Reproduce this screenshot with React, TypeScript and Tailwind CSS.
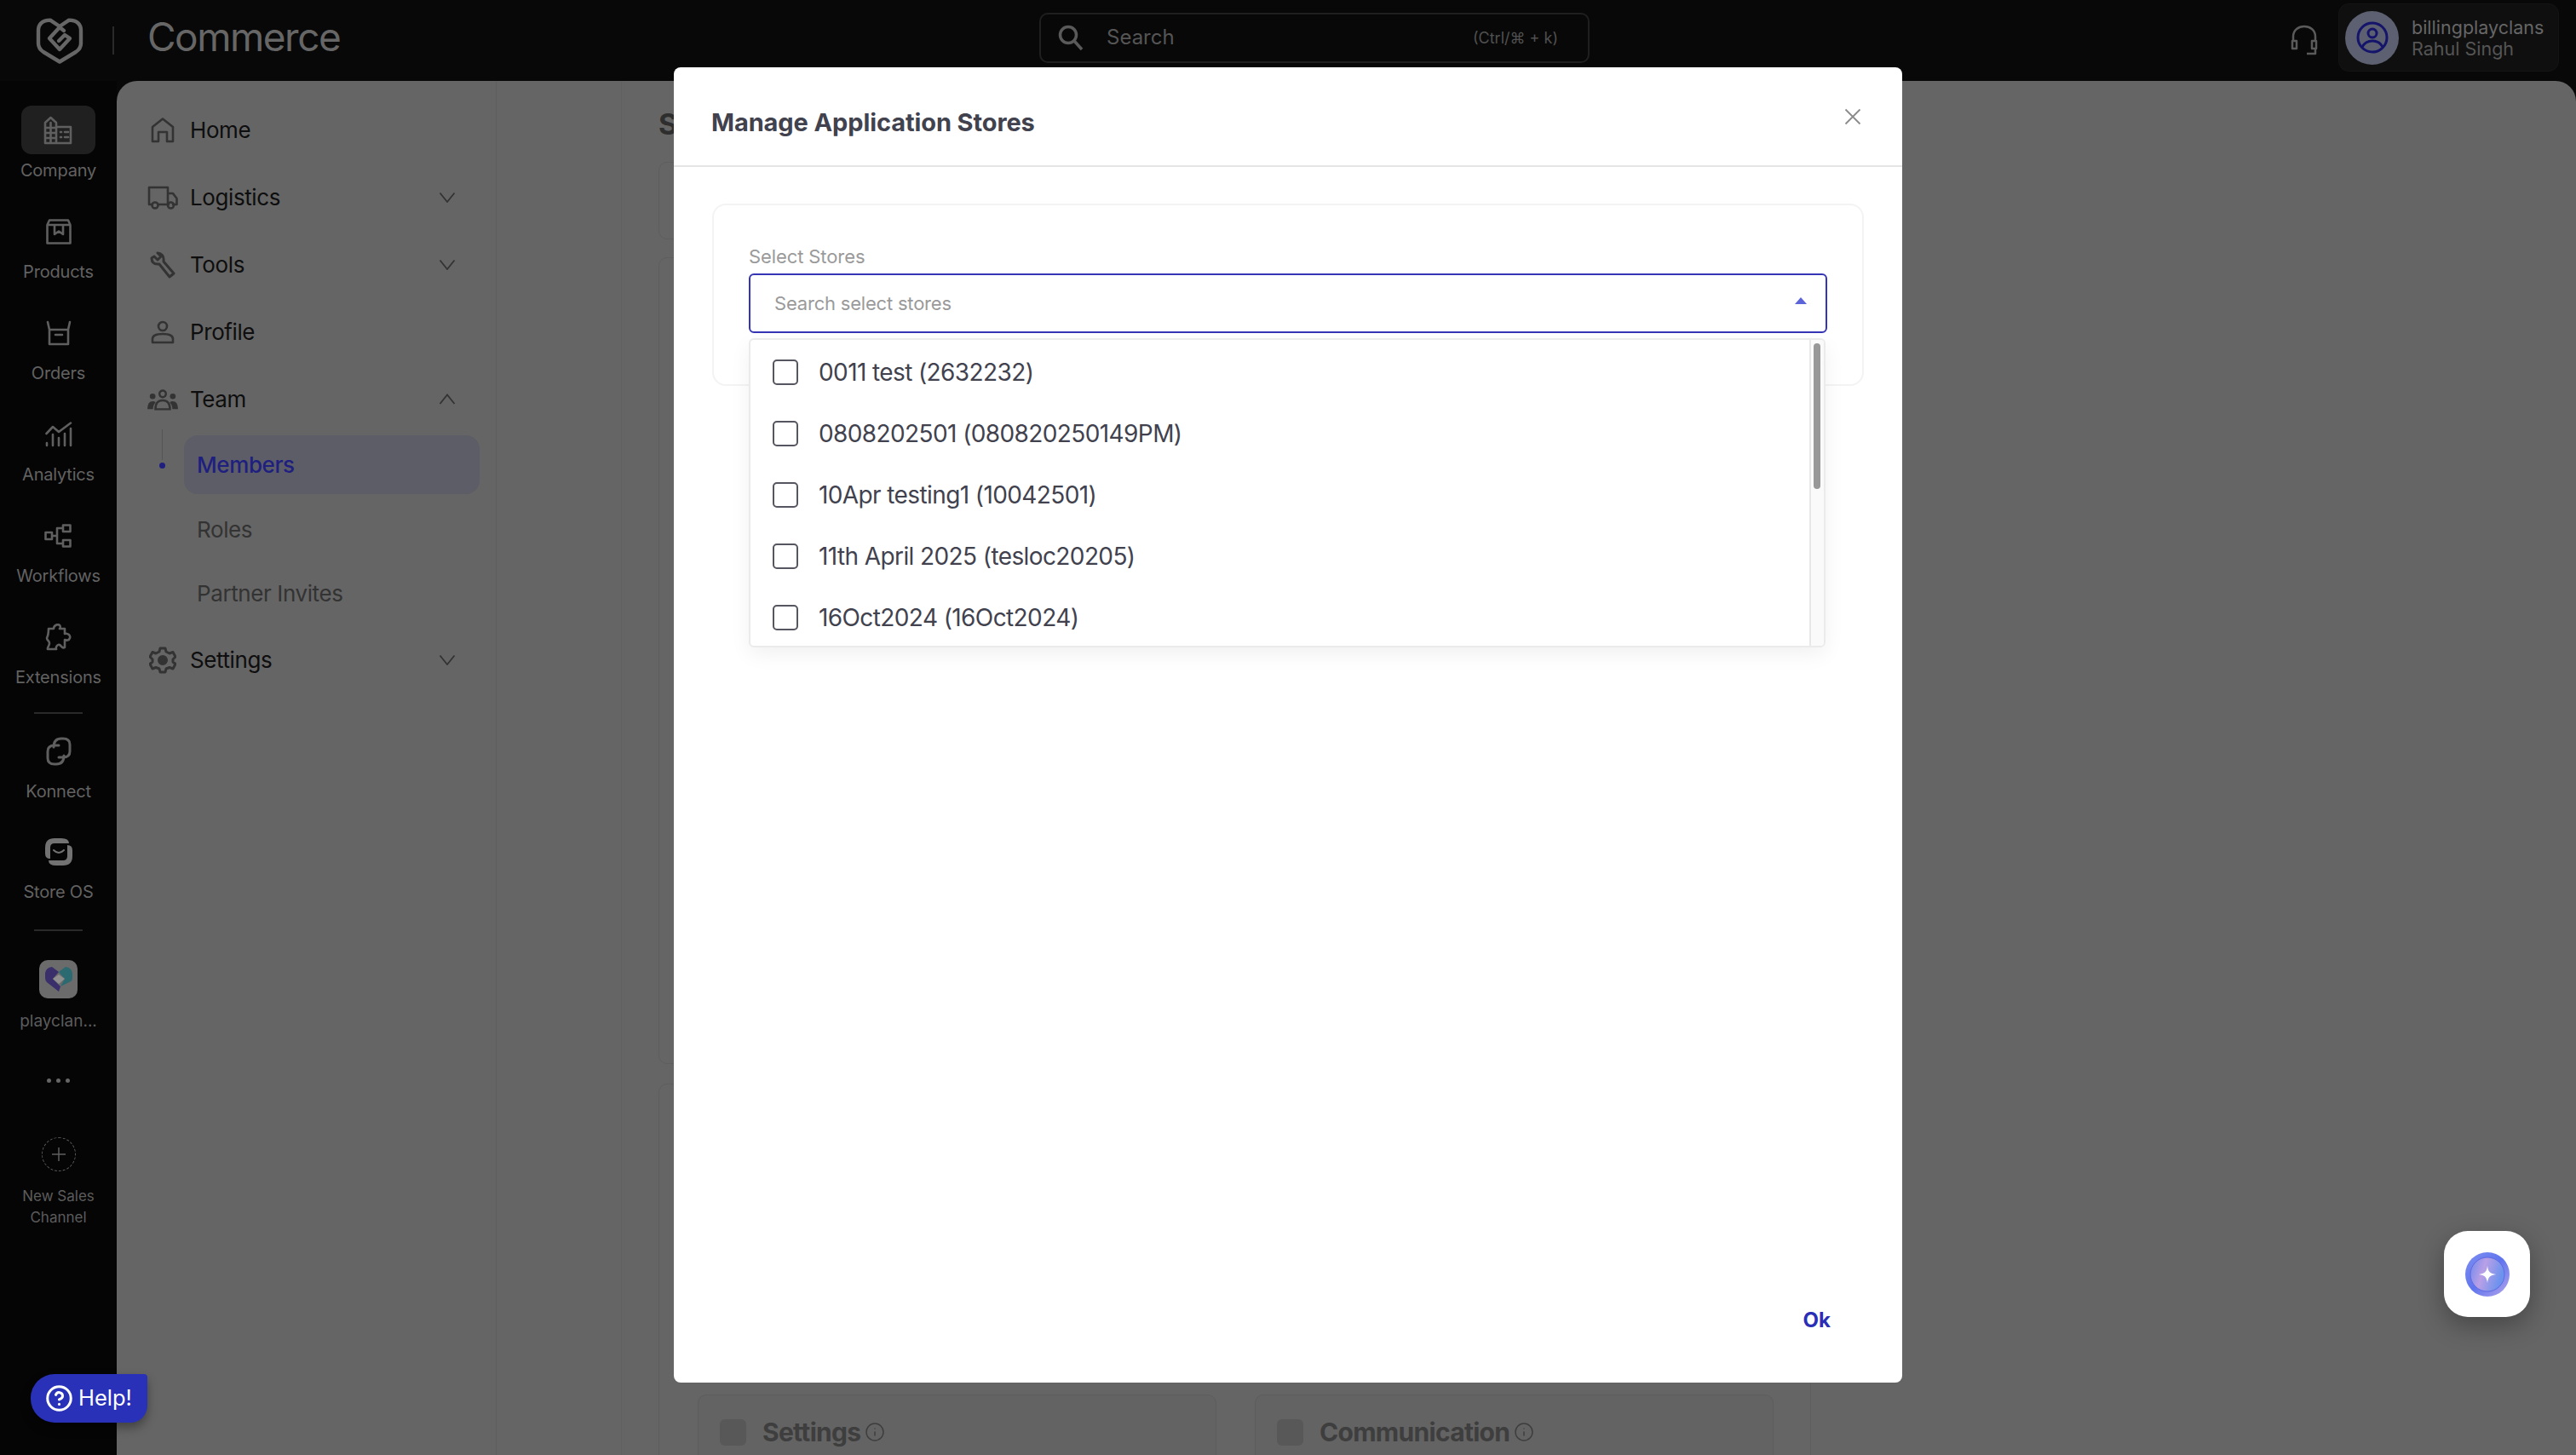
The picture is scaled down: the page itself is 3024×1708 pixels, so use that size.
import React from "react";
import { CircleHelp, Info } from "lucide-react";

const side = { fill: "none", stroke: "#5f5f5f", strokeWidth: 2.6, strokeLinejoin: "round" as const, strokeLinecap: "round" as const };
const nav = { fill: "none", stroke: "#333333", strokeWidth: 2.6, strokeLinejoin: "round" as const, strokeLinecap: "round" as const };

function Logo() {
  return (
    <svg width="56" height="54" viewBox="0 0 56 54" fill="none" stroke="#666666" strokeWidth="4.4" strokeLinejoin="round" strokeLinecap="round">
      <path d="M28 10 L17 2.6 Q3 3 3 15 V30 Q3 36 9 40 L28 51.5 L47 40 Q53 36 53 30 V15 Q53 3 39 2.6 Z" />
      <path d="M33 15 L28 11 L16 24 L28 37 L40 24 L34 20 L27 27" />
    </svg>
  );
}

function SideIcons({ name }: { name: string }) {
  if (name === "Company")
    return (
      <svg width="34" height="34" viewBox="0 0 34 34" {...side}>
        <path d="M2 32 V8 L8.5 2 L15 8 V32 M2 32 H32 V13 H15 M2 14 H15 M2 20 H15 M2 26 H15 M8.500 8 V32" />
        <path d="M20 19 H21 M25 19 H29 M20 25 H21 M25 25 H29" />
      </svg>
    );
  if (name === "Products")
    return (
      <svg width="30" height="30" viewBox="0 0 30 30" {...side}>
        <path d="M4 1.500 H26 L28.500 7 V28.500 H1.500 V7 Z M1.500 7 H28.500 M10 7 V18 L15 14.500 L20 18 V7" />
      </svg>
    );
  if (name === "Orders")
    return (
      <svg width="32" height="30" viewBox="0 0 32 30" {...side}>
        <path d="M3 2 L5 11 V28 H27 V11 L29 2 M5 11 H27 M12 17 H20" />
      </svg>
    );
  if (name === "Analytics")
    return (
      <svg width="32" height="30" viewBox="0 0 32 30" {...side}>
        <path d="M1.500 14 L9 6 L16 12 L30 1.500 M2 28 V25 M9 28 V15 M16 28 V19 M23 28 V14 M30 28 V8" />
      </svg>
    );
  if (name === "Workflows")
    return (
      <svg width="32" height="28" viewBox="0 0 32 28" {...side}>
        <path d="M1.500 10 H9 V18 H1.500 Z M22 1.500 H30.500 V9 H22 Z M22 19 H30.500 V26.500 H22 Z M9 14 H15 M15 5 V23 M15 5 H22 M15 23 H22" />
      </svg>
    );
  if (name === "Extensions")
    return (
      <svg width="32" height="32" viewBox="0 0 32 32" {...side}>
        <path d="M5 6 H11 C11 2 16 0 18 2 C19 3 19 5 18 6 H24 V12 C28 11 31 14 30 17 C29 20 26 20 24 19 V28 C21 30 20 26 18 25 C16 24 13 27 14 30 L4 30 C3 29 6 26 6 23 C6 20 3 20 3 17 C5 13 5 10 5 6 Z" />
      </svg>
    );
  if (name === "Konnect")
    return (
      <svg width="30" height="34" viewBox="0 0 30 34" {...side}>
        <path d="M9 12 Q9 2 18 2 H20 Q28 2 28 9 V17 Q28 24 20 24 H15" strokeWidth="3" />
        <path d="M21 22 Q21 32 12 32 H10 Q2 32 2 25 V17 Q2 10 10 10 H15" strokeWidth="3" />
      </svg>
    );
  if (name === "Store OS")
    return (
      <svg width="34" height="34" viewBox="0 0 34 34">
        <path d="M1 12 Q1 1 12 1 H20 Q29 1 29 7 H12 Q7 7 7 12 V25 Q1 25 1 19 Z" fill="#727272" />
        <path d="M33 22 Q33 33 22 33 H14 Q5 33 5 27 H22 Q27 27 27 22 V9 Q33 9 33 15 Z" fill="#727272" />
        <path d="M11 15 Q17 21 23 15" fill="none" stroke="#727272" strokeWidth="2" strokeLinecap="round" />
      </svg>
    );
  return null;
}

function Rail({ name, active, h }: { name: string; active?: boolean; h: string }) {
  return (
    <div className={`flex flex-col items-center ${h}`}>
      <div className={`flex h-[57px] w-[87px] items-center justify-center rounded-[12px] ${active ? "bg-[#202020]" : ""}`}>
        <SideIcons name={name} />
      </div>
      <span className="mt-[7px] text-[20px] leading-[24px] tracking-[-0.2px] text-[#626262]">{name}</span>
    </div>
  );
}

function Chevron({ up }: { up?: boolean }) {
  return (
    <svg width="20" height="13" viewBox="0 0 20 13" fill="none" stroke="#333333" strokeWidth="1.800">
      <path d={up ? "M1.500 12 L10 1.500 L18.500 12" : "M1.500 1.500 L10 12 L18.500 1.500"} />
    </svg>
  );
}

function NavIcon({ name }: { name: string }) {
  if (name === "Home")
    return (
      <svg width="28" height="30" viewBox="0 0 28 30" {...nav}>
        <path d="M2 28 V11 L14 1.500 L26 11 V28 H19 V17 H9 V28 Z" />
      </svg>
    );
  if (name === "Logistics")
    return (
      <svg width="36" height="28" viewBox="0 0 36 28" {...nav}>
        <path d="M6 22 H2 V2 H24 V22 H13 M24 9 H30 L34.500 15 V22 H30 M24 22 H25" />
        <circle cx="9" cy="23" r="3.500" />
        <circle cx="27.500" cy="23" r="3.500" />
      </svg>
    );
  if (name === "Tools")
    return (
      <svg width="30" height="32" viewBox="0 0 30 32" {...nav}>
        <path d="M9 2 L13 6 L9 10 L5 6 L2 8 Q2 15 9 15 L11 15 L23 30 L28 26 L16 12 Q17 3 9 2 Z" strokeWidth="3" />
      </svg>
    );
  if (name === "Profile")
    return (
      <svg width="28" height="28" viewBox="0 0 28 28" {...nav}>
        <circle cx="14" cy="7" r="5" />
        <path d="M2 26 V22 Q2 16 14 16 Q26 16 26 22 V26 Z" />
      </svg>
    );
  if (name === "Team")
    return (
      <svg width="38" height="26" viewBox="0 0 38 26">
        <circle cx="19" cy="6" r="4" fill="none" stroke="#333333" strokeWidth="2.600" />
        <circle cx="6.500" cy="9" r="3.500" fill="#333333" />
        <circle cx="31.500" cy="9" r="3.500" fill="#333333" />
        <path d="M10 25 Q10 14 19 14 Q28 14 28 25 Z" fill="none" stroke="#333333" strokeWidth="2.600" />
        <path d="M0 25 Q0 15 7 15 Q10 15 10 17 Q7 20 7 25 Z M38 25 Q38 15 31 15 Q28 15 28 17 Q31 20 31 25 Z" fill="#333333" />
      </svg>
    );
  return (
    <svg width="32" height="32" viewBox="0 0 32 32" fill="none" stroke="#333333" strokeWidth="3" strokeLinejoin="round">
      <path d="M13 2 H19 L20 6 L24 8 L28 6.500 L31 12 L28 15 V18 L31 20.500 L28 26 L24 24.500 L20 26 L19 30 H13 L12 26 L8 24.500 L4 26 L1 20.500 L4 18 V15 L1 12 L4 6.500 L8 8 L12 6 Z" />
      <circle cx="16" cy="16" r="4.500" fill="#333333" />
    </svg>
  );
}

function NavRow({ name, chevron }: { name: string; chevron?: "up" | "down" }) {
  return (
    <div className="flex h-[79px] items-center pl-[36px] pr-[47px]">
      <div className="flex w-[36px] justify-center">
        <NavIcon name={name} />
      </div>
      <span className="ml-[14px] flex-1 text-[26px] tracking-[-0.4px] text-[#0e0e0e]">{name}</span>
      {chevron && <Chevron up={chevron === "up"} />}
    </div>
  );
}

const stores = [
  "0011 test (2632232)",
  "0808202501 (080820250149PM)",
  "10Apr testing1 (10042501)",
  "11th April 2025 (tesloc20205)",
  "16Oct2024 (16Oct2024)",
];

function SubCard({ title }: { title: string }) {
  return (
    <div className="h-[120px] w-[609px] rounded-[10px] border border-[#5d5d5d] bg-[#636363] pl-[25px] pt-[24px]">
      <div className="flex items-center">
        <div className="h-[31px] w-[31px] rounded-[6px] bg-[#585858]" />
        <span className="ml-[19px] text-[30px] font-bold leading-[38px] tracking-[-0.7px] text-[#3e3e3e]">{title}</span>
        <Info size={24} strokeWidth={1.5} className="ml-[5px] text-[#3e3e3e]" />
      </div>
    </div>
  );
}

export default function App() {
  return (
    <div className="relative h-[1708px] w-[3024px] overflow-hidden bg-[#080808] font-['Inter',sans-serif]">
      <header className="flex h-[95px] items-center">
        <div className="flex w-[1220px] items-center pl-[42px]">
          <Logo />
          <div className="ml-[34px] h-[33px] w-[2px] bg-[#2a2a2a]" />
          <span className="ml-[39px] mt-[-9px] text-[46px] leading-[54px] tracking-[-1.500px] text-[#666666]">Commerce</span>
        </div>
        <div className="mt-[-7px] flex h-[59px] w-[646px] items-center rounded-[10px] border-2 border-[#1f1f1f] pl-[20px] pr-[35px]">
          <svg width="30" height="32" viewBox="0 0 30 32" fill="none" stroke="#5a5a5a" strokeWidth="3.500">
            <circle cx="12" cy="13" r="9.500" />
            <path d="M19 20 L28 30" />
          </svg>
          <span className="ml-[27px] flex-1 text-[24px] text-[#555555]">Search</span>
          <span className="text-[18px] text-[#505050]">(Ctrl/⌘ + k)</span>
        </div>
        <div className="ml-[823px] mt-[-2px] flex items-center">
          <svg width="32" height="36" viewBox="0 0 32 36" fill="none" stroke="#5a5a5a" strokeWidth="2.500" strokeLinejoin="round">
            <path d="M3 20 V14 C3 -2 29 -2 29 14 V20 M2 19 H7 V28 H2 Z M25 19 H30 V28 H25 Z M29 28 V34 H19" />
          </svg>
        </div>
        <div className="ml-[24px] flex h-[80px] w-[259px] items-center rounded-[12px] border border-[#141414] bg-[#0f0f0f] pl-[7px] mt-[-7px]">
          <div className="flex h-[63px] w-[63px] items-center justify-center rounded-full bg-[#5c6070]">
            <svg width="40" height="40" viewBox="0 0 40 40" fill="none" stroke="#14146a" strokeWidth="3">
              <circle cx="20" cy="20" r="17" />
              <circle cx="20" cy="15" r="5" />
              <path d="M8 31 Q12 24 20 24 Q28 24 32 31" />
            </svg>
          </div>
          <div className="ml-[15px] mt-[1px] flex flex-col">
            <span className="text-[21.500px] leading-[25px] text-[#666666]">billingplayclans</span>
            <span className="text-[21.500px] leading-[25px] text-[#555555]">Rahul Singh</span>
          </div>
        </div>
      </header>

      <div className="flex h-[1613px]">
        <aside className="flex w-[137px] flex-col items-center bg-[#050505] pt-[29px]">
          <Rail name="Company" active h="h-[119px]" />
          <Rail name="Products" h="h-[119px]" />
          <Rail name="Orders" h="h-[119px]" />
          <Rail name="Analytics" h="h-[119px]" />
          <Rail name="Workflows" h="h-[119px]" />
          <Rail name="Extensions" h="h-[113px]" />
          <div className="mb-[15px] mt-[4px] h-[2px] w-[57px] bg-[#2a2a2a]" />
          <Rail name="Konnect" h="h-[118px]" />
          <Rail name="Store OS" h="h-[118px]" />
          <div className="mt-[2px] h-[2px] w-[57px] bg-[#2a2a2a]" />
          <div className="mt-[34px] flex h-[45px] w-[45px] items-center justify-center rounded-[10px] bg-[#6b6b6b]">
            <svg width="32" height="32" viewBox="0 0 32 32">
              <path d="M8 1 L16 7 L9 15 L18 24 L16 30 L2 19 Q0 17 0 14 V8 Q1 2 8 1 Z" fill="#3a2f6b" />
              <path d="M24 1 L16 7 L23 15 L18 24 L30 18 Q32 17 32 14 V8 Q31 2 24 1 Z" fill="#2a6a70" />
              <path d="M9 15 L16 10 L23 15 L16 21 Z" fill="#8f8f8f" />
            </svg>
          </div>
          <span className="mt-[15px] text-[19px] leading-[24px] text-[#5c5c5c]">playclan...</span>
          <div className="mt-[55px] flex gap-[6px]">
            <span className="h-[5px] w-[5px] rounded-full bg-[#666666]" />
            <span className="h-[5px] w-[5px] rounded-full bg-[#666666]" />
            <span className="h-[5px] w-[5px] rounded-full bg-[#666666]" />
          </div>
          <div className="mt-[64px] flex h-[40px] w-[40px] items-center justify-center rounded-full border border-dashed border-[#5a5a5a]">
            <svg width="16" height="16" viewBox="0 0 16 16" stroke="#5f5f5f" strokeWidth="1.500">
              <path d="M8 0 V16 M0 8 H16" />
            </svg>
          </div>
          <span className="mt-[17px] text-center text-[17px] leading-[25px] text-[#5c5c5c]">
            New Sales
            <br />
            Channel
          </span>
        </aside>

        <main className="flex flex-1 overflow-hidden rounded-t-[24px] bg-[#656565]">
          <nav className="w-[446px] border-r border-[#5e5e5e] pt-[18px]">
            <NavRow name="Home" />
            <NavRow name="Logistics" chevron="down" />
            <NavRow name="Tools" chevron="down" />
            <NavRow name="Profile" />
            <NavRow name="Team" chevron="up" />
            <div className="relative pl-[79px] pr-[19px] text-[26px] tracking-[-0.4px]">
              <div className="absolute left-[53px] top-[-4px] h-[36px] w-[1px] bg-[#555555]" />
              <div className="absolute left-[50px] top-[35px] h-[7px] w-[7px] rounded-full bg-[#1f1f80]" />
              <div className="flex h-[75px] items-center">
                <div className="flex h-[69px] w-full items-center rounded-[16px] bg-[#5c5d66] pl-[15px] font-medium text-[#1f1f80]">Members</div>
              </div>
              <div className="mt-[1px] flex h-[75px] items-center pl-[15px] text-[#333333]">Roles</div>
              <div className="flex h-[75px] items-center pl-[15px] text-[#333333]">Partner Invites</div>
            </div>
            <div className="mt-[1px]">
              <NavRow name="Settings" chevron="down" />
            </div>
          </nav>
          <div className="w-[147px] border-r border-[#606060]" />
          <div className="flex-1 pl-[43px]">
            <h1 className="mt-[28px] h-[67px] text-[34px] font-bold leading-[46px] text-[#2e2e2e]">S</h1>
            <div className="h-[91px] w-[1353px] rounded-[10px] border border-[#5e5e5e]" />
            <div className="mt-[21px] h-[947px] w-[1353px] rounded-[10px] border border-[#5e5e5e]" />
            <div className="mt-[23px] h-[500px] w-[1353px] rounded-[10px] border border-[#5e5e5e] pl-[45px] pt-[364px]">
              <div className="flex gap-[45px]">
                <SubCard title="Settings" />
                <SubCard title="Communication" />
              </div>
            </div>
          </div>
        </main>
      </div>

      {/* Modal */}
      <section className="absolute left-[791px] top-[79px] flex h-[1544px] w-[1442px] flex-col rounded-[8px] bg-white">
        <div className="flex h-[117px] items-center justify-between border-b-2 border-[#e5e5e5] pl-[44px] pr-[48px]">
          <h2 className="mt-[15px] text-[29px] font-bold tracking-[-0.1px] text-[#41424e]">Manage Application Stores</h2>
          <svg width="20" height="20" viewBox="0 0 20 20" stroke="#8a8a8a" strokeWidth="1.800">
            <path d="M1.500 1.500 L18.500 18.500 M18.500 1.500 L1.500 18.500" />
          </svg>
        </div>
        <div className="relative ml-[45px] mt-[43px] h-[214px] w-[1352px] rounded-[16px] border-2 border-[#f3f3f3] pl-[41px] pr-[42px] pt-[46px]">
          <label className="block text-[22px] leading-[28px] tracking-[-0.1px] text-[#9a9a9a]">Select Stores</label>
          <div className="mt-[6px] flex h-[70px] w-[1266px] items-center justify-between rounded-[6px] border-2 border-[#3535b5] pl-[28px] pr-[22px]">
            <span className="text-[22px] tracking-[-0.2px] text-[#9a9a9a]">Search select stores</span>
            <svg width="14" height="8" viewBox="0 0 14 8" className="mt-[-6px]">
              <path d="M7 0 L14 8 H0 Z" fill="#5b64d8" />
            </svg>
          </div>
          <div className="absolute left-[41px] top-[156px] flex h-[363px] w-[1264px] overflow-hidden rounded-[6px] border-2 border-[#ebebeb] bg-white shadow-[0_8px_24px_rgba(0,0,0,0.06)]">
            <ul className="flex-1 pt-[2px]">
              {stores.map((s) => (
                <li key={s} className="flex h-[72px] items-center pl-[26px]">
                  <span className="h-[30px] w-[30px] rounded-[5px] border-2 border-[#55565f]" />
                  <span className="ml-[24px] text-[28px] tracking-[-0.6px] text-[#41424e]">{s}</span>
                </li>
              ))}
            </ul>
            <div className="w-[17px] border-l-2 border-[#e8e8e8] bg-[#fafafa] pl-[3px] pt-[4px]">
              <div className="h-[171px] w-[8px] rounded-[4px] bg-[#989898]" />
            </div>
          </div>
        </div>
        <div className="mt-auto flex justify-end pb-[58px] pr-[84px]">
          <button className="text-[24px] font-bold leading-[30px] text-[#2a2fb5]">Ok</button>
        </div>
      </section>

      {/* Help */}
      <button className="absolute left-[36px] top-[1613px] flex h-[57px] w-[137px] items-center rounded-bl-[28px] rounded-br-[20px] rounded-tl-[28px] rounded-tr-[4px] bg-[#2831b8] pl-[17px] shadow-[0_6px_12px_rgba(0,0,0,0.35)]">
        <CircleHelp size={33} strokeWidth={2.200} className="text-white" />
        <span className="ml-[6px] text-[25.500px] text-white">Help!</span>
      </button>

      {/* Assistant */}
      <div className="absolute left-[2869px] top-[1445px] flex h-[101px] w-[101px] items-center justify-center rounded-[28px] bg-white shadow-[0_10px_30px_rgba(0,0,0,0.3)]">
        <svg width="54" height="54" viewBox="0 0 54 54">
          <defs>
            <linearGradient id="ring" x1="0" y1="0" x2="1" y2="1">
              <stop offset="0" stopColor="#7f90f0" />
              <stop offset="0.5" stopColor="#5f74ee" />
              <stop offset="1" stopColor="#b6a6ec" />
            </linearGradient>
            <linearGradient id="core" x1="0" y1="0" x2="1" y2="0.300">
              <stop offset="0" stopColor="#6f88ee" />
              <stop offset="0.45" stopColor="#b9a0e6" />
              <stop offset="1" stopColor="#6a92ee" />
            </linearGradient>
          </defs>
          <circle cx="27" cy="27" r="26" fill="url(#ring)" />
          <circle cx="27" cy="27" r="20" fill="url(#core)" stroke="#5f6be0" strokeWidth="1" />
          <path d="M27 17 C28 24 30 26 37 27 C30 28 28 30 27 37 C26 30 24 28 17 27 C24 26 26 24 27 17 Z" fill="#ffffff" />
        </svg>
      </div>
    </div>
  );
}
